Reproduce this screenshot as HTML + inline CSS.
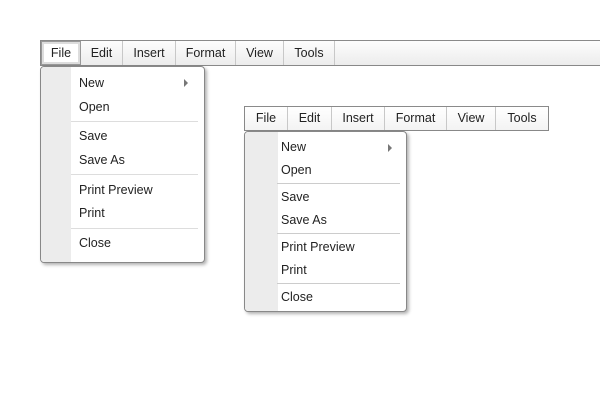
<!DOCTYPE html>
<html><head><meta charset="utf-8"><style>
*{margin:0;padding:0;box-sizing:border-box}
body{width:600px;height:400px;background:#fff;position:relative;overflow:hidden;font-family:"Liberation Sans",sans-serif;font-size:12.5px;color:#222}
.bar{position:absolute;border:1px solid #888;border-top-color:#8a8a8a;background:linear-gradient(#fdfdfd,#ececec);}
.it{position:absolute;top:0;bottom:0;border-right:1px solid #c8c8c8;text-align:center;}
.sel{background:#fff;box-shadow:inset 0 0 0 2px #ddd;border:1px solid #999}
.menu{position:absolute;background:#fff;border:1px solid #888;border-radius:4px;box-shadow:2px 2px 3px rgba(0,0,0,.3);overflow:hidden}
.gut{position:absolute;left:0;top:0;bottom:0;background:#ececec}
.m{position:absolute;white-space:nowrap}
.sep{position:absolute;height:1px;background:#ddd}
.arr{position:absolute;width:0;height:0;border-left:4px solid #777;border-top:4px solid transparent;border-bottom:4px solid transparent}
</style></head><body>

<div class="bar" style="left:40px;top:40px;width:570px;height:26px;border-right:none">
 <div class="it sel" style="left:0;width:40px;line-height:23px">File</div>
 <div class="it" style="left:40px;width:42px;line-height:24px">Edit</div>
 <div class="it" style="left:82px;width:53px;line-height:24px">Insert</div>
 <div class="it" style="left:135px;width:60px;line-height:24px">Format</div>
 <div class="it" style="left:195px;width:48px;line-height:24px">View</div>
 <div class="it" style="left:243px;width:51px;line-height:24px">Tools</div>
</div>

<div class="menu" style="left:40px;top:66px;width:165px;height:197px">
 <div class="gut" style="width:30px"></div>
 <div class="m" style="left:38px;top:9px">New</div>
 <div class="arr" style="left:143px;top:12px"></div>
 <div class="m" style="left:38px;top:33px">Open</div>
 <div class="sep" style="left:30px;right:6px;top:54px"></div>
 <div class="m" style="left:38px;top:62px">Save</div>
 <div class="m" style="left:38px;top:86px">Save As</div>
 <div class="sep" style="left:30px;right:6px;top:107px"></div>
 <div class="m" style="left:38px;top:116px">Print Preview</div>
 <div class="m" style="left:38px;top:139px">Print</div>
 <div class="sep" style="left:30px;right:6px;top:161px"></div>
 <div class="m" style="left:38px;top:169px">Close</div>
</div>

<div class="bar" style="left:244px;top:106px;width:305px;height:25px;background:linear-gradient(#fff,#f3f3f3)">
 <div class="it" style="left:0;width:43px;line-height:23px">File</div>
 <div class="it" style="left:43px;width:44px;line-height:23px">Edit</div>
 <div class="it" style="left:87px;width:53px;line-height:23px">Insert</div>
 <div class="it" style="left:140px;width:62px;line-height:23px">Format</div>
 <div class="it" style="left:202px;width:49px;line-height:23px">View</div>
 <div class="it" style="left:251px;width:52px;line-height:23px;border-right:none">Tools</div>
</div>

<div class="menu" style="left:244px;top:131px;width:163px;height:181px">
 <div class="gut" style="width:33px"></div>
 <div class="m" style="left:36px;top:8px">New</div>
 <div class="arr" style="left:143px;top:12px"></div>
 <div class="m" style="left:36px;top:31px">Open</div>
 <div class="sep" style="left:32px;right:6px;top:51px;background:#ccc"></div>
 <div class="m" style="left:36px;top:58px">Save</div>
 <div class="m" style="left:36px;top:81px">Save As</div>
 <div class="sep" style="left:32px;right:6px;top:101px;background:#ccc"></div>
 <div class="m" style="left:36px;top:108px">Print Preview</div>
 <div class="m" style="left:36px;top:131px">Print</div>
 <div class="sep" style="left:32px;right:6px;top:151px;background:#ccc"></div>
 <div class="m" style="left:36px;top:158px">Close</div>
</div>

</body></html>
